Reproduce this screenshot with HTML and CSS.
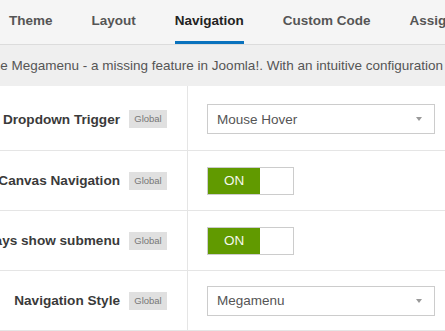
FILE: index.html
```html
<!DOCTYPE html>
<html>
<head>
  <meta charset="UTF-8">
  <meta name="viewport" content="width=device-width, initial-scale=1">
  <title>Navigation settings</title>
  <link rel="stylesheet" href="styles.css">
</head>
<body>
  <div class="tabs">
    <a class="tab">Theme</a>
    <a class="tab">Layout</a>
    <a class="tab active">Navigation</a>
    <a class="tab">Custom Code</a>
    <a class="tab">Assignment</a>
  </div>
  <div class="intro">
    <p>the Megamenu - a missing feature in Joomla!. With an intuitive configuration interface, you can build your menu easily.</p>
  </div>
  <div class="form">
    <div class="row first">
      <div class="label-cell">
        <span class="label">Dropdown Trigger</span>
        <span class="badge">Global</span>
      </div>
      <div class="field-cell">
        <div class="select">Mouse Hover<span class="arrow"></span></div>
      </div>
    </div>
    <div class="row">
      <div class="label-cell">
        <span class="label">Off-Canvas Navigation</span>
        <span class="badge">Global</span>
      </div>
      <div class="field-cell">
        <div class="toggle"><span class="on">ON</span></div>
      </div>
    </div>
    <div class="row">
      <div class="label-cell">
        <span class="label">Always show submenu</span>
        <span class="badge">Global</span>
      </div>
      <div class="field-cell">
        <div class="toggle"><span class="on">ON</span></div>
      </div>
    </div>
    <div class="row">
      <div class="label-cell">
        <span class="label">Navigation Style</span>
        <span class="badge">Global</span>
      </div>
      <div class="field-cell">
        <div class="select">Megamenu<span class="arrow"></span></div>
      </div>
    </div>
  </div>
</body>
</html>
```
FILE: styles.css
```css
body {
  margin: 0;
  padding: 0;
  background-color: #fff;
  font-family: "Liberation Sans", Arial, sans-serif;
  color: #333;
  overflow: hidden;
}

.tabs {
  display: flex;
  gap: 39px;
  height: 44px;
  padding-left: 9px;
  background-color: #f5f5f5;
  border-bottom: 1px solid #dcdcdc;
  white-space: nowrap;
}

.tab {
  flex-shrink: 0;
  line-height: 41px;
  border-bottom: 3px solid transparent;
  font-size: 13.5px;
  font-weight: bold;
  color: #555;
}

.tab.active {
  color: #222;
  border-bottom-color: #0a72bd;
}

.intro {
  background-color: #efefef;
  height: 41px;
  overflow: hidden;
}

.intro p {
  margin: 0;
  line-height: 41px;
  font-size: 13.5px;
  color: #555;
  white-space: nowrap;
  text-indent: -11px;
}

.row {
  display: flex;
  border-bottom: 1px solid #e5e5e5;
}

.label-cell,
.field-cell {
  display: flex;
  align-items: center;
  height: 59px;
  box-sizing: border-box;
}

.row.first .label-cell,
.row.first .field-cell {
  height: 64px;
  padding-top: 2px;
}

.label-cell {
  width: 188px;
  flex-shrink: 0;
  justify-content: flex-end;
  gap: 9px;
  padding-right: 20px;
  border-right: 1px solid #e5e5e5;
  white-space: nowrap;
}

.label {
  flex-shrink: 0;
  font-size: 13.6px;
  font-weight: bold;
  color: #3a3a3a;
}

.badge {
  flex-shrink: 0;
  width: 38px;
  height: 18px;
  line-height: 18px;
  text-align: center;
  background-color: #e0e0e0;
  font-size: 9.5px;
  color: #777;
}

.field-cell {
  flex: 1;
  padding-left: 19px;
}

.select {
  display: flex;
  align-items: center;
  justify-content: space-between;
  width: 228px;
  height: 30px;
  box-sizing: border-box;
  border: 1px solid #ccc;
  padding: 0 12px 0 9px;
  font-size: 13.5px;
  color: #555;
  background-color: #fff;
}

.arrow {
  width: 0;
  height: 0;
  border-left: 3px solid transparent;
  border-right: 3px solid transparent;
  border-top: 4px solid #999;
}

.toggle {
  display: flex;
  width: 87px;
  height: 28px;
  box-sizing: border-box;
  border: 1px solid #ccc;
  background-color: #fff;
}

.on {
  width: 52px;
  line-height: 26px;
  text-align: center;
  background-color: #619a00;
  color: #f4f8ec;
  font-size: 13.5px;
}
```
